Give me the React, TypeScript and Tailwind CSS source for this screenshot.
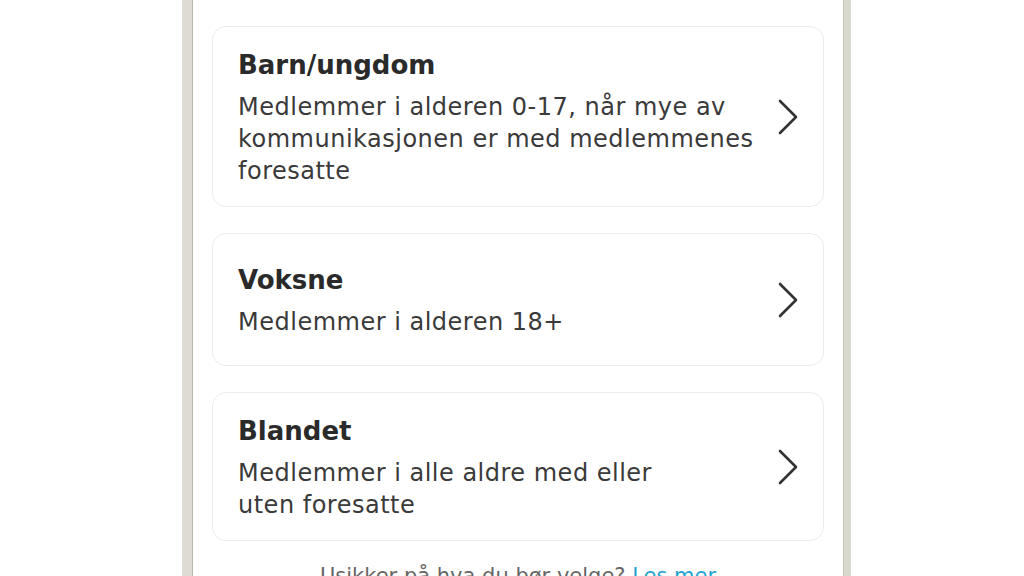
type Group = {
    title: string;
    lines: string[];
};

const groups: Group[] = [
    {
        title: 'Barn/ungdom',
        lines: ['Medlemmer i alderen 0-17, når mye av', 'kommunikasjonen er med medlemmenes', 'foresatte'],
    },
    {
        title: 'Voksne',
        lines: ['Medlemmer i alderen 18+'],
    },
    {
        title: 'Blandet',
        lines: ['Medlemmer i alle aldre med eller', 'uten foresatte'],
    },
];

function Chevron() {
    return (
        <svg width="24" height="38" viewBox="0 0 24 38" fill="none" className="shrink-0">
            <polyline
                points="4,3 20,19 4,35"
                stroke="#333333"
                strokeWidth="2.6"
                strokeLinecap="round"
                strokeLinejoin="round"
            />
        </svg>
    );
}

function GroupCard({ group }: { group: Group }) {
    return (
        <button
            type="button"
            className="w-full shrink-0 min-h-[133px] flex items-center justify-between text-left bg-white border border-[#ececec] rounded-[14px] pl-[25px] pr-[23px] pt-[20px] pb-[19px]"
        >
            <div className="flex flex-col">
                <div className="text-[26px] leading-[36px] font-bold text-[#2a2a2a]">{group.title}</div>
                <div className="mt-[8px] text-[24px] leading-[32px] tracking-[0.5px] text-[#3a3a3a]">
                    {group.lines.map((line, i) => (
                        <div key={i} className="whitespace-nowrap">
                            {line}
                        </div>
                    ))}
                </div>
            </div>
            <Chevron />
        </button>
    );
}

export default function App() {
    return (
        <div
            className="w-[1024px] h-[576px] overflow-hidden bg-white flex"
            style={{ fontFamily: '"DejaVu Sans", "Noto Sans", sans-serif' }}
        >
            <div className="w-[182px] shrink-0" />
            <div className="w-[11px] shrink-0 bg-[#dedcd2] border-r border-[#b8b8ae]" />
            <div className="w-[650px] shrink-0 px-[19px] pt-[26px] flex flex-col gap-[26px]">
                {groups.map((g) => (
                    <GroupCard key={g.title} group={g} />
                ))}
                <p className="shrink-0 text-center text-[21px] leading-[24px] text-[#666666] mt-[-3px] whitespace-nowrap">
                    Usikker på hva du bør velge? <span className="text-[#1ea4cf]">Les mer</span>
                </p>
            </div>
            <div className="w-[8px] shrink-0 bg-[#d9d9cf] border-l border-[#c4c4ba]" />
            <div className="flex-1" />
        </div>
    );
}
